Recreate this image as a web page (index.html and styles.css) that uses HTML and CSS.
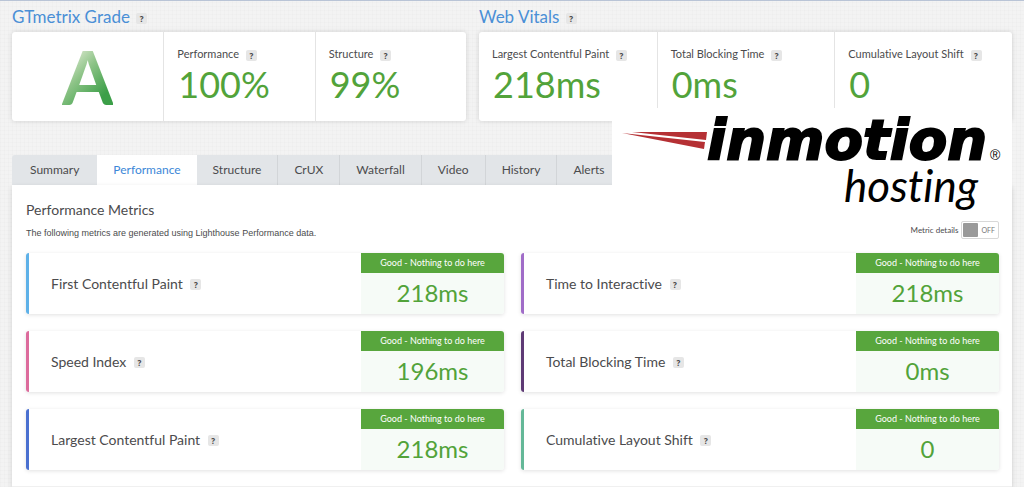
FILE: index.html
```html
<!DOCTYPE html>
<html lang="en">
<head>
<meta charset="utf-8">
<title>GTmetrix Performance Report</title>
<link rel="stylesheet" href="styles.css">
</head>
<body>
<main class="page">
  <div class="overview">
    <section>
      <h2 class="section-title">GTmetrix Grade <button class="help">?</button></h2>
      <div class="card grade-card">
        <div class="grade"><span class="grade-letter">A</span></div>
        <div class="score"><h3>Performance <button class="help">?</button></h3><p>100%</p></div>
        <div class="score"><h3>Structure <button class="help">?</button></h3><p>99%</p></div>
      </div>
    </section>
    <section>
      <h2 class="section-title">Web Vitals <button class="help">?</button></h2>
      <div class="card vitals-card">
        <div class="score"><h3>Largest Contentful Paint <button class="help">?</button></h3><p>218ms</p></div>
        <div class="score"><h3>Total Blocking Time <button class="help">?</button></h3><p>0ms</p></div>
        <div class="score"><h3>Cumulative Layout Shift <button class="help">?</button></h3><p>0</p></div>
      </div>
    </section>
  </div>

  <nav class="tabs">
    <a href="#summary">Summary</a>
    <a href="#performance" class="active">Performance</a>
    <a href="#structure">Structure</a>
    <a href="#crux">CrUX</a>
    <a href="#waterfall">Waterfall</a>
    <a href="#video">Video</a>
    <a href="#history">History</a>
    <a href="#alerts">Alerts</a>
  </nav>

  <section class="panel">
    <h2 class="panel-title">Performance Metrics</h2>
    <div class="panel-intro">
      <p>The following metrics are generated using Lighthouse Performance data.</p>
      <div class="details">
        <span id="details-label">Metric details</span>
        <button class="switch" role="switch" aria-checked="false" aria-labelledby="details-label"><span class="knob"></span>OFF</button>
      </div>
    </div>
    <div class="metrics">
      <article class="metric sky"><h3>First Contentful Paint <button class="help">?</button></h3><div class="result"><span>Good - Nothing to do here</span><strong>218ms</strong></div></article>
      <article class="metric violet"><h3>Time to Interactive <button class="help">?</button></h3><div class="result"><span>Good - Nothing to do here</span><strong>218ms</strong></div></article>
      <article class="metric pink"><h3>Speed Index <button class="help">?</button></h3><div class="result"><span>Good - Nothing to do here</span><strong>196ms</strong></div></article>
      <article class="metric plum"><h3>Total Blocking Time <button class="help">?</button></h3><div class="result"><span>Good - Nothing to do here</span><strong>0ms</strong></div></article>
      <article class="metric blue"><h3>Largest Contentful Paint <button class="help">?</button></h3><div class="result"><span>Good - Nothing to do here</span><strong>218ms</strong></div></article>
      <article class="metric teal"><h3>Cumulative Layout Shift <button class="help">?</button></h3><div class="result"><span>Good - Nothing to do here</span><strong>0</strong></div></article>
    </div>
  </section>

  <div class="brand">
    <svg viewBox="0 0 400 110" role="img" aria-label="InMotion Hosting">
      <path d="M20 24 L95 24 L94 32 Z" fill="#b53034"/>
      <path d="M10 25 L93 34 L92 41 Z" fill="#b53034"/>
      <text class="brand-name" x="95" y="51">inmotion</text>
      <text class="brand-mark" x="378" y="52">®</text>
      <text class="brand-sub" x="232" y="94">hosting</text>
    </svg>
  </div>
</main>
</body>
</html>
```
FILE: styles.css
```css
* { box-sizing: border-box; }
body {
  margin: 0;
  color: #4b4b4d;
  font-family: Lato, "Open Sans", sans-serif;
  font-variant-ligatures: none;
  background-color: #f3f3f3;
  background-image:
    repeating-linear-gradient(0deg, rgba(0,0,0,.012) 0 1px, transparent 1px 4px),
    repeating-linear-gradient(90deg, rgba(0,0,0,.012) 0 1px, transparent 1px 4px);
}
h2, h3, p { margin: 0; font-weight: 400; }
.page {
  position: relative;
  min-height: 100vh;
  padding: 0 12px;
  border-top: 1px solid #b9c4d6;
  display: flex;
  flex-direction: column;
}
.help {
  width: 11px;
  height: 11px;
  margin-left: 4px;
  padding: 0;
  border: 0;
  border-radius: 2px;
  background: #e6e6e6;
  color: #444;
  font: 700 8px/11px "Open Sans", sans-serif;
  text-align: center;
  vertical-align: middle;
}
.section-title .help { margin-left: 2px; }
.overview {
  display: grid;
  grid-template-columns: 454fr 533fr;
  gap: 13px;
}
.section-title {
  padding: 6px 0 5px;
  color: #4a8fd6;
  font-size: 17px;
  line-height: 20px;
}
.card {
  display: grid;
  grid-template-columns: repeat(3, 1fr);
  height: 89px;
  background: #fff;
  border-radius: 3px;
  box-shadow: 0 0 5px rgba(0,0,0,.14);
}
.grade { display: flex; align-items: center; justify-content: center; }
.grade-letter {
  font-size: 74px;
  line-height: 89px;
  font-weight: 700;
  color: transparent;
  background: linear-gradient(135deg, #cfe3c4 25%, #8cc386 45%, #3c9f48 75%);
  background-clip: text;
  -webkit-background-clip: text;
}
.score { padding: 13px 0 0 13px; white-space: nowrap; }
.score + .score, .grade + .score { border-left: 1px solid #e4e4e4; }
.score h3 { font-size: 11px; line-height: 18px; }
.score p { padding-left: 1px; color: #52a33a; font-size: 36px; line-height: 42px; }
.tabs { display: flex; margin-top: 34px; }
.tabs a {
  padding: 0 16px;
  border-right: 1px solid #d2d5d8;
  background: #e2e5e8;
  color: #4b4b4d;
  font-size: 12px;
  line-height: 30px;
  text-decoration: none;
}
.tabs a:first-child { padding: 0 18px; border-top-left-radius: 3px; border-right: 0; }
.tabs a.active { background: #fff; color: #3c87d8; border-right: 0; }
.panel {
  flex: 1;
  padding: 15px 13px 15px 14px;
  background: #fff;
  border-bottom: 1px solid #f0f0f0;
  box-shadow: 0 2px 5px rgba(0,0,0,.14);
}
.panel-title { font-size: 14px; line-height: 20px; }
.panel-intro { display: flex; justify-content: space-between; height: 33px; }
.panel-intro p { font: 9px/12px "Liberation Sans", Arial, sans-serif; padding-top: 7px; }
.details { display: flex; align-items: center; gap: 3px; height: 20px; font-size: 8px; }
.switch {
  display: flex;
  align-items: center;
  gap: 3px;
  height: 18px;
  padding: 1px 3px 1px 1px;
  border: 1px solid #d8d8d8;
  border-radius: 2px;
  background: #fff;
  color: #777;
  font: 7px/14px Lato, sans-serif;
}
.knob { width: 15px; height: 14px; border-radius: 1px; background: #999; }
.metrics { display: grid; grid-template-columns: 1fr 1fr; gap: 17px; }
.metric {
  display: flex;
  align-items: center;
  justify-content: space-between;
  height: 61px;
  padding-left: 22px;
  border-left: 3px solid;
  border-radius: 3px;
  box-shadow: 0 1px 4px rgba(0,0,0,.12);
}
.metric h3 { color: #4b4b4d; font-size: 14px; line-height: 20px; }
.sky { border-color: #5eb1e8; }
.violet { border-color: #a06cc8; }
.pink { border-color: #dc6b9c; }
.plum { border-color: #5e3a75; }
.blue { border-color: #4a70d0; }
.teal { border-color: #64b898; }
.result {
  width: 143px;
  height: 61px;
  overflow: hidden;
  border-radius: 0 3px 3px 0;
  background: #f6fbf7;
  text-align: center;
}
.result span { display: block; background: #58a63d; color: #fff; font-size: 9px; line-height: 20px; }
.result strong { display: block; color: #52a33a; font-size: 24px; line-height: 40px; font-weight: 400; }
.brand {
  position: absolute;
  top: 107px;
  right: 12px;
  width: 400px;
  background: #fff;
}
.brand svg { display: block; overflow: visible; }
.brand-name { font: italic 700 56px "DejaVu Sans", sans-serif; stroke: #000; stroke-width: 2px; }
.brand-mark { font: 14px "Liberation Sans", sans-serif; }
.brand-sub { font: italic 400 44px Lato, sans-serif; font-variant-ligatures: none; }
```
